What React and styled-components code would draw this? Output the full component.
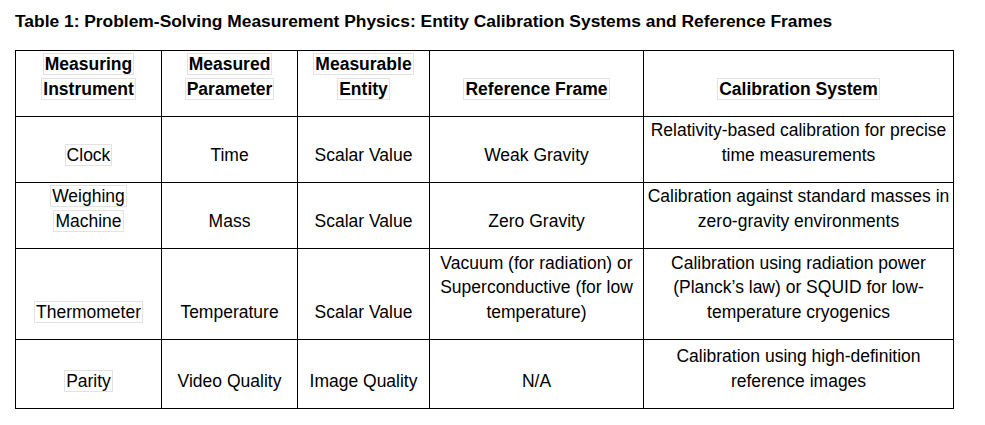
import React from "react";
import styled, { createGlobalStyle } from "styled-components";

const GlobalStyle = createGlobalStyle`
  html, body {
    margin: 0;
    padding: 0;
    background: #ffffff;
  }
  body {
    font-family: "Liberation Sans", Arial, sans-serif;
    color: #000000;
  }
`

const Page = styled.div`
  display: flex;
  flex-direction: column;
  padding: 11px 0 0 15px;
`
const Title = styled.h1`
  margin: 0;
  font-size: 17.4px;
  line-height: 20px;
  font-weight: bold;
  color: #000;
`
const Table = styled.table`
  margin-top: 19px;
  width: 938px;
  border-collapse: collapse;
  table-layout: fixed;
`
const Row = styled.tr`
  height: ${({h}) => h}px;
`
const Cell = styled.td`
  border: 1px solid #000;
  padding: 0 2px 15px;
  vertical-align: bottom;
  text-align: center;
  font-size: 17.5px;
  line-height: 24.5px;
  font-weight: ${({head}) => head ? 'bold' : 'normal'};
`
const Mark = styled.span`
  border: 1px solid #e2e2e2;
  padding: 0 1px;
  -webkit-box-decoration-break: clone;
  box-decoration-break: clone;
`

const widths = [146, 136, 132, 214, 310]

const header = ['Measuring Instrument', 'Measured Parameter', 'Measurable Entity', 'Reference Frame', 'Calibration System']

const rows = [
    {h: 66, cells: ['Clock', 'Time', 'Scalar Value', 'Weak Gravity', 'Relativity-based calibration for precise time measurements']},
    {h: 66, cells: ['Weighing Machine', 'Mass', 'Scalar Value', 'Zero Gravity', 'Calibration against standard masses in zero-gravity environments']},
    {h: 91, cells: ['Thermometer', 'Temperature', 'Scalar Value', 'Vacuum (for radiation) or Superconductive (for low temperature)', 'Calibration using radiation power (Planck\u2019s law) or SQUID for low-temperature cryogenics']},
    {h: 69, cells: ['Parity', 'Video Quality', 'Image Quality', 'N/A', 'Calibration using high-definition reference images']},
]

const App = () => {
    return (<Page>
        <GlobalStyle/>
        <Title>{'Table 1: Problem-Solving Measurement Physics: Entity Calibration Systems and Reference Frames'}</Title>
        <Table>
            <colgroup>
                {widths.map((w, i) => <col key={i} style={{width: w}}/>)}
            </colgroup>
            <tbody>
            <Row h={66}>
                {header.map((t) => <Cell head key={t}><Mark>{t}</Mark></Cell>)}
            </Row>
            {rows.map((r, i) => (<Row h={r.h} key={i}>
                {r.cells.map((t, j) => <Cell key={j}>{j === 0 ? <Mark>{t}</Mark> : t}</Cell>)}
            </Row>))}
            </tbody>
        </Table>
    </Page>)
}

export default App;
